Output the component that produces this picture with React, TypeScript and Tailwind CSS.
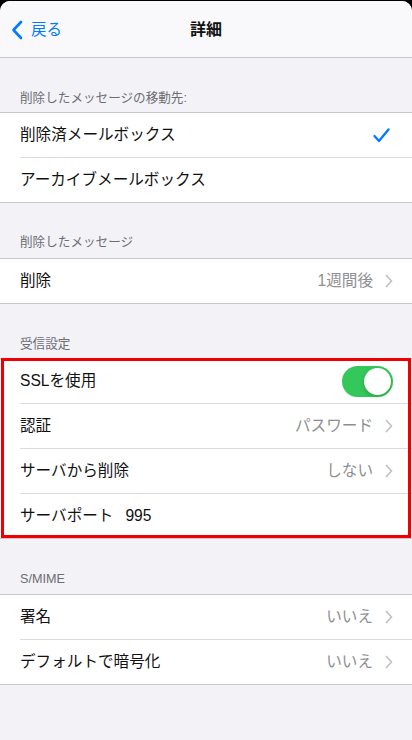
import React from "react";

const font = "font-['Liberation_Sans','Noto_Sans_CJK_JP',sans-serif]";

const Chevron = () => (
  <svg width="8" height="14" viewBox="0 0 8 14" className="ml-[12px]">
    <path d="M1.5 1.5 L6.5 7 L1.5 12.5" fill="none" stroke="#c4c4c7" strokeWidth="1.8" strokeLinecap="round" strokeLinejoin="round" />
  </svg>
);

const Check = () => (
  <svg width="17" height="15" viewBox="0 0 17 15">
    <path d="M1.5 8 L6 13 L15.5 1.5" fill="none" stroke="#007aff" strokeWidth="2.3" strokeLinecap="round" strokeLinejoin="round" />
  </svg>
);

const Toggle = () => (
  <div className="w-[51px] h-[31px] rounded-full bg-[#34c759] relative">
    <div className="absolute right-[2px] top-[2px] w-[27px] h-[27px] rounded-full bg-white shadow-[0_2px_4px_rgba(0,0,0,0.18)]" />
  </div>
);

interface RowProps {
  label: React.ReactNode;
  value?: string;
  right?: React.ReactNode;
  last?: boolean;
  chevron?: boolean;
}

// one cell of a grouped list; inset divider unless it is the last one
const Row: React.FC<RowProps> = ({ label, value, right, last = false, chevron = false }) => (
  <div className="pl-[20px] bg-white">
    <div className={`flex items-center pr-[19px] ${last ? "h-[44px]" : "h-[45px] border-b border-[#dcdce0]"}`}>
      <div className="flex-1 text-[15.6px] leading-[20px] text-[#111]">{label}</div>
      {value && <span className="text-[15.6px] leading-[20px] text-[#8e8e93]">{value}</span>}
      {chevron && <Chevron />}
      {right}
    </div>
  </div>
);

const Header: React.FC<{ children: React.ReactNode; h: string; pb: string }> = ({ children, h, pb }) => (
  <div className={`${h} ${pb} flex items-end px-[20px] text-[12.6px] leading-[16px] text-[#6d6d72]`}>
    {children}
  </div>
);

const Group: React.FC<{ children: React.ReactNode }> = ({ children }) => (
  <div className="border-y border-[#c8c7cc] bg-white">{children}</div>
);

export default function App() {
  return (
    <div className={`w-[412px] h-[740px] bg-black overflow-hidden ${font}`}>
      <div className="h-[740px] mt-[1px] rounded-t-[10px] bg-[#f2f2f7] overflow-hidden">
        {/* Nav bar */}
        <div className="h-[57px] bg-[#f9f9fb] border-b border-[#c8c7cc] relative flex items-center justify-center">
          <div className="absolute left-[11px] top-[19px] flex items-center text-[#007aff]">
            <svg width="12" height="20" viewBox="0 0 12 20">
              <path d="M10 2 L2.5 10 L10 18" fill="none" stroke="#007aff" strokeWidth="2.6" strokeLinecap="round" strokeLinejoin="round" />
            </svg>
            <span className="ml-[8px] text-[15.5px] leading-[20px]">戻る</span>
          </div>
          <span className="text-[16px] leading-[20px] font-bold text-[#111] mt-[1px]">詳細</span>
        </div>

        <Header h="h-[54px]" pb="pb-[6px]">削除したメッセージの移動先:</Header>
        <Group>
          <Row label="削除済メールボックス" right={<div className="mr-[3px]"><Check /></div>} />
          <Row label="アーカイブメールボックス" last />
        </Group>

        <Header h="h-[55px]" pb="pb-[8px]">削除したメッセージ</Header>
        <Group>
          <Row label="削除" value="1週間後" chevron last />
        </Group>

        <Header h="h-[54px]" pb="pb-[6px]">受信設定</Header>
        <div className="relative">
          <Group>
            <Row label="SSLを使用" right={<Toggle />} />
            <Row label="認証" value="パスワード" chevron />
            <Row label="サーバから削除" value="しない" chevron />
            <Row
              label={
                <span>
                  サーバポート<span className="ml-[12px]">995</span>
                </span>
              }
              last
            />
          </Group>
          {/* red annotation frame drawn over the group */}
          <div className="absolute top-0 bottom-[1px] left-[1px] right-[1px] border-[3px] border-[#f00000] pointer-events-none" />
        </div>

        <Header h="h-[55px]" pb="pb-[7px]">S/MIME</Header>
        <Group>
          <Row label="署名" value="いいえ" chevron />
          <Row label="デフォルトで暗号化" value="いいえ" chevron last />
        </Group>
      </div>
    </div>
  );
}
